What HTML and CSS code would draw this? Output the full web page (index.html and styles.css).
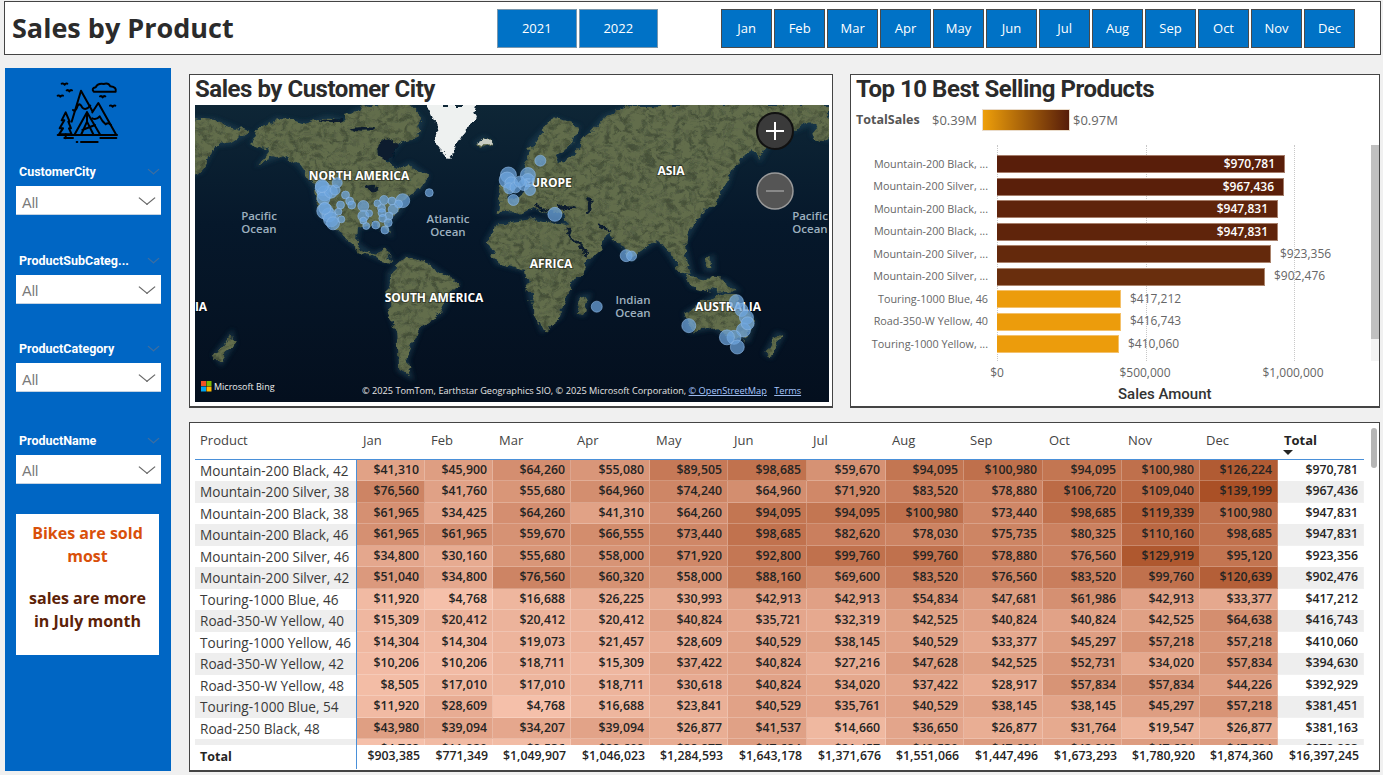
FILE: index.html
```html
<!DOCTYPE HTML>
<html>
<head>
<meta http-equiv="Content-Type" content="text/html; charset=utf-8">
<title>Sales by Product</title>
<link rel="stylesheet" href="styles.css">
</head>

<body>
<header class="topbar">
	<h1 class="page-title">Sales by Product</h1>
	<div class="years">
		<div class="btn year">2021</div>
		<div class="btn year">2022</div>
	</div>
	<div class="months">
		<div class="btn month">Jan</div>
		<div class="btn month">Feb</div>
		<div class="btn month">Mar</div>
		<div class="btn month">Apr</div>
		<div class="btn month">May</div>
		<div class="btn month">Jun</div>
		<div class="btn month">Jul</div>
		<div class="btn month">Aug</div>
		<div class="btn month">Sep</div>
		<div class="btn month">Oct</div>
		<div class="btn month">Nov</div>
		<div class="btn month">Dec</div>
	</div>
</header>

<div class="layout">
	<aside class="sidebar">
		<svg class="logo" viewBox="0 0 255 225" width="85" height="75">
			<g fill="none" stroke="#000" stroke-width="6" stroke-linejoin="round" stroke-linecap="round">
				<path d="M80 140 L108 47 L142 108"/>
				<path d="M84 105 Q92 112 98 92 Q104 82 112 98 Q122 108 136 92"/>
				<path d="M88 180 L126 112 L166 180"/>
				<path d="M126 112 L126 140 L108 180 M126 140 L146 180 M112 165 L150 150"/>
				<path d="M142 112 L160 84 L214 180"/>
				<path d="M142 130 Q154 136 164 124 Q172 140 182 148 Q190 140 198 150"/>
				<path d="M38 180 H216"/>
				<path d="M62 112 L50 136 H58 L44 160 H54 L42 178 H80 L72 160 H78 L70 140 H74 Z"/>
				<path d="M62 178 V190"/>
				<path d="M58 189 H84 M166 189 H214 M108 201 H158 M95 201 H97"/>
				<path d="M146 50 Q138 40 152 37 Q158 24 176 27 Q190 22 196 34 Q216 36 212 50 H146 Z"/>
				<path d="M50 26 Q56 24 59 29 Q62 24 67 26 M65 46 Q70 44 73 49 Q76 44 81 46 M38 62 Q44 60 46 65 Q49 60 54 62 M165 64 Q170 62 173 67 Q176 62 181 64 M195 92 Q200 90 203 95 Q206 90 211 92"/>
			</g>
		</svg>

		<div class="slicer">
			<div class="slicer-head"><span>CustomerCity</span><i class="chev dim"></i></div>
			<div class="slicer-box"><span>All</span><i class="chev"></i></div>
		</div>
		<div class="slicer">
			<div class="slicer-head"><span>ProductSubCateg...</span><i class="chev dim"></i></div>
			<div class="slicer-box"><span>All</span><i class="chev"></i></div>
		</div>
		<div class="slicer">
			<div class="slicer-head"><span>ProductCategory</span><i class="chev dim"></i></div>
			<div class="slicer-box"><span>All</span><i class="chev"></i></div>
		</div>
		<div class="slicer last">
			<div class="slicer-head"><span>ProductName</span><i class="chev dim"></i></div>
			<div class="slicer-box"><span>All</span><i class="chev"></i></div>
		</div>

		<div class="note">
			<p class="orange">Bikes are sold most</p>
			<p class="brown">sales are more in July month</p>
		</div>
	</aside>

	<main class="content">
		<section class="card map-card">
			<h2 class="card-title">Sales by Customer City</h2>
			<div class="map">
				<svg id="mapSvg" viewBox="0 0 634 297" width="634" height="297">
					<defs>
						<linearGradient id="sea" x1="0" y1="0" x2="0" y2="1">
							<stop offset="0" stop-color="#0e2636"/>
							<stop offset=".4" stop-color="#06182b"/>
							<stop offset="1" stop-color="#040f1e"/>
						</linearGradient>
						<filter id="soft"><feGaussianBlur stdDeviation="14"/></filter>
						<filter id="coast"><feGaussianBlur stdDeviation="7"/></filter>
						<filter id="rough" filterUnits="userSpaceOnUse" x="0" y="0" width="1600" height="950">
							<feTurbulence type="fractalNoise" baseFrequency=".028" numOctaves="5" seed="7" result="n"/>
							<feDisplacementMap in="SourceGraphic" in2="n" scale="34" xChannelSelector="R" yChannelSelector="G"/>
							<feGaussianBlur stdDeviation=".8"/>
						</filter>
						<filter id="grain" filterUnits="userSpaceOnUse" x="0" y="0" width="1600" height="950">
							<feTurbulence type="fractalNoise" baseFrequency=".06" numOctaves="4" seed="4"/>
							<feColorMatrix type="matrix" values="0 0 0 0 .06  0 0 0 0 .08  0 0 0 0 .04  0 0 0 3 -1.25"/>
							<feComposite in2="SourceAlpha" operator="in"/>
						</filter>
						<g id="land">
							<!-- north america -->
							<path d="M150 130 L170 85 L210 55 L280 70 L330 50 L380 62 L395 35 L440 15 L525 15 L560 60 L545 112 L510 120 L490 150 L470 185 L500 210 L530 190 L572 228 L560 262 L525 290 L505 335 L478 368 L482 402 L465 385 L452 372 L405 385 L402 430 L440 462 L470 450 L488 485 L462 480 L410 450 L370 410 L345 375 L312 340 L300 262 L262 195 L225 165 L170 190 L195 150 Z"/>
							<!-- south america -->
							<path d="M480 520 L522 470 L575 492 L645 552 L605 640 L552 682 L522 780 L532 832 L505 812 L500 700 L478 620 Z"/>
							<!-- africa -->
							<path d="M715 425 L742 368 L830 355 L902 378 L950 445 L996 420 L962 482 L915 560 L892 650 L850 692 L822 600 L810 512 L742 490 Z"/>
							<!-- eurasia -->
							<path d="M742 338 L748 305 L790 298 L815 262 L800 212 L825 125 L880 55 L935 80 L925 130 L880 165 L890 195 L920 170 L950 120 L1000 50 L1070 15 L1541 15 L1541 55 L1500 70 L1440 100 L1390 145 L1375 180 L1358 150 L1310 195 L1295 255 L1270 300 L1232 345 L1192 428 L1210 525 L1185 520 L1160 470 L1130 420 L1065 475 L1042 440 L1010 400 L1000 420 L955 465 L905 385 L900 345 L860 338 L830 320 L800 340 L770 340 Z"/>
							<!-- islands -->
							<path d="M690 128 L710 112 L726 130 L705 140 Z"/>
							<path d="M1195 525 L1240 535 L1290 540 L1320 570 L1270 575 L1210 560 Z"/>
							<path d="M1240 480 L1260 470 L1262 510 L1245 510 Z"/>
							<path d="M940 590 L962 585 L948 645 L935 640 Z"/>
							<path d="M1195 640 L1260 590 L1300 578 L1330 610 L1360 668 L1345 722 L1290 705 L1262 682 L1208 695 Z"/>
							<path d="M1415 700 L1430 705 L1400 770 L1388 760 Z"/>
							<path d="M60 765 L100 700 L105 730 L75 790 Z"/>
							<path d="M12 55 L60 60 L140 100 L100 130 L60 135 L25 215 L0 225 L0 55 Z"/>
							<path d="M1500 60 L1560 50 L1560 125 L1505 110 Z"/>
							<path d="M750 258 L775 235 L775 300 L745 305 Z"/>
						</g>
						<clipPath id="landClip"><use href="#land"/></clipPath>
					</defs>

					<rect width="634" height="297" fill="url(#sea)"/>
					<g transform="translate(-4.98 -5) scale(.4146 .3333)">
						<use href="#land" fill="#1a3c50" stroke="#1a3c50" stroke-width="10" filter="url(#coast)" opacity=".7"/>
						<g filter="url(#rough)">
							<use href="#land" fill="#626d4c"/>
							<g clip-path="url(#landClip)">
								<g filter="url(#soft)">
									<ellipse cx="850" cy="410" rx="115" ry="50" fill="#b3a47a"/>
									<ellipse cx="965" cy="400" rx="40" ry="36" fill="#ad9b71"/>
									<ellipse cx="1060" cy="310" rx="140" ry="40" fill="#988c63"/>
									<ellipse cx="1270" cy="645" rx="75" ry="45" fill="#ab9465"/>
									<ellipse cx="400" cy="345" rx="55" ry="45" fill="#918660"/>
									<ellipse cx="550" cy="550" rx="60" ry="55" fill="#31522a"/>
									<ellipse cx="865" cy="530" rx="50" ry="35" fill="#3b582f"/>
									<ellipse cx="1190" cy="480" rx="40" ry="55" fill="#3a5830"/>
									<ellipse cx="1180" cy="130" rx="220" ry="55" fill="#5e6a46"/>
									<ellipse cx="320" cy="135" rx="120" ry="50" fill="#556245"/>
									<ellipse cx="1110" cy="425" rx="40" ry="35" fill="#7b7c52"/>
									<ellipse cx="480" cy="40" rx="80" ry="25" fill="#7d867a"/>
								</g>
							</g>
							<use href="#land" filter="url(#grain)"/>
							<!-- inland water -->
							<g fill="#071a2d">
								<ellipse cx="478" cy="150" rx="24" ry="32"/>
								<ellipse cx="905" cy="322" rx="26" ry="7"/>
								<ellipse cx="962" cy="318" rx="7" ry="20"/>
								<ellipse cx="445" cy="262" rx="18" ry="7"/>
								<ellipse cx="345" cy="60" rx="30" ry="6"/>
								<ellipse cx="420" cy="85" rx="26" ry="7"/>
							</g>
							<path d="M905 385 L958 470 M985 368 L1012 395 M830 310 L860 334" fill="none" stroke="#071a2d" stroke-width="6"/>
							<path d="M578 15 L692 15 L672 90 L622 172 L600 140 Z" fill="#eef1f0"/>
							<path d="M692 126 L710 114 L724 128 L706 136 Z" fill="#c8cdc4"/>
						</g>
					</g>

					<g class="lbl-sea">
						<text x="64" y="115">Pacific</text>
						<text x="64" y="128">Ocean</text>
						<text x="253" y="118">Atlantic</text>
						<text x="253" y="131">Ocean</text>
						<text x="438" y="199">Indian</text>
						<text x="438" y="212">Ocean</text>
						<text x="615" y="115">Pacific</text>
						<text x="615" y="128">Ocean</text>
					</g>
					<g class="lbl-land">
						<text x="164" y="75">NORTH AMERICA</text>
						<text x="476" y="70">ASIA</text>
						<text x="353" y="82">EUROPE</text>
						<text x="356" y="163">AFRICA</text>
						<text x="239" y="197">SOUTH AMERICA</text>
						<text x="533" y="206">AUSTRALIA</text>
						<text x="6" y="206">IA</text>
					</g>
					<g id="pins"></g>

					<g class="zoom-btn">
						<circle cx="580" cy="26" r="18" fill="#3a3a3a" stroke="#111" stroke-width="2"/>
						<path d="M571 26 H589 M580 17 V35" stroke="#fff" stroke-width="2"/>
						<circle cx="580" cy="86" r="18" fill="#555" stroke="#9a9a9a" stroke-width="1.5"/>
						<path d="M571 86 H589" stroke="#888" stroke-width="2"/>
					</g>

					<g>
						<rect x="6" y="276" width="5" height="5" fill="#f25022"/>
						<rect x="11.5" y="276" width="5" height="5" fill="#7fba00"/>
						<rect x="6" y="281.5" width="5" height="5" fill="#00a4ef"/>
						<rect x="11.5" y="281.5" width="5" height="5" fill="#ffb900"/>
					</g>
					<text class="bing" x="19" y="285">Microsoft Bing</text>
					<text class="attrib" x="167" y="289">© 2025 TomTom, Earthstar Geographics SIO, © 2025 Microsoft Corporation, <tspan class="attrib-link">© OpenStreetMap</tspan>  <tspan class="attrib-link" dx="5">Terms</tspan></text>
				</svg>
			</div>
		</section>

		<section class="card chart-card">
			<h2 class="card-title">Top 10 Best Selling Products</h2>
			<div class="legend">
				<b>TotalSales</b>
				<span>$0.39M</span>
				<i class="legend-bar"></i>
				<span>$0.97M</span>
			</div>
			<div class="chart">
				<div class="plot">
					<i class="grid g0"></i><i class="grid g1"></i><i class="grid g2"></i>
					<div class="bar-row"><span class="bar-label">Mountain-200 Black, ...</span><div class="bar in" style="width:288px;background:#591e0a">$970,781</div></div>
					<div class="bar-row"><span class="bar-label">Mountain-200 Silver, ...</span><div class="bar in" style="width:287px;background:#5a1f0a">$967,436</div></div>
					<div class="bar-row"><span class="bar-label">Mountain-200 Black, ...</span><div class="bar in" style="width:281px;background:#5f240b">$947,831</div></div>
					<div class="bar-row"><span class="bar-label">Mountain-200 Black, ...</span><div class="bar in" style="width:281px;background:#5f240b">$947,831</div></div>
					<div class="bar-row"><span class="bar-label">Mountain-200 Silver, ...</span><div class="bar" style="width:274px;background:#64290c"></div><span class="bar-value">$923,356</span></div>
					<div class="bar-row"><span class="bar-label">Mountain-200 Silver, ...</span><div class="bar" style="width:268px;background:#692e0d"></div><span class="bar-value">$902,476</span></div>
					<div class="bar-row"><span class="bar-label">Touring-1000 Blue, 46</span><div class="bar" style="width:124px;background:#ec9c0c"></div><span class="bar-value">$417,212</span></div>
					<div class="bar-row"><span class="bar-label">Road-350-W Yellow, 40</span><div class="bar" style="width:124px;background:#ec9c0c"></div><span class="bar-value">$416,743</span></div>
					<div class="bar-row"><span class="bar-label">Touring-1000 Yellow, ...</span><div class="bar" style="width:122px;background:#ec9c0c"></div><span class="bar-value">$410,060</span></div>
				</div>
				<div class="chart-scroll"><i></i></div>
			</div>
			<div class="axis">
				<span>$0</span><span>$500,000</span><span>$1,000,000</span>
			</div>
			<div class="axis-title">Sales Amount</div>
		</section>

		<section class="card matrix-card">
			<div class="matrix">
				<div class="m-row m-head" id="mHead"></div>
				<div class="m-body" id="mBody"></div>
				<div class="m-row m-total" id="mTotal"></div>
			</div>
			<i class="matrix-scroll"></i>
		</section>
	</main>
</div>
<script src="script.js"></script>
</body>
</html>
```

FILE: styles.css
```css
*{
	margin: 0;
	padding: 0;
	box-sizing: border-box;
}

body{
	width: 1383px;
	height: 775px;
	overflow: hidden;
	background-color: #f0f0f0;
	font-family: "Open Sans", "Liberation Sans", sans-serif;
	color: #252423;
}
i{
	display: block;
}

/* top bar */
.topbar{
	display: flex;
	align-items: center;
	height: 54px;
	margin: 1px 2px 0 4px;
	padding-left: 7px;
	background-color: white;
	border: 1px solid #444;
}
.page-title{
	width: 485px;
	padding-bottom: 2px;
	font-size: 27px;
	font-weight: 700;
	color: #2b2b2b;
	white-space: nowrap;
}
.years,
.months{
	display: flex;
	gap: 2px;
}
.months{
	margin-left: 63px;
	gap: 1.7px;
}
.btn{
	display: flex;
	align-items: center;
	justify-content: center;
	height: 39px;
	background-color: #0072c6;
	color: white;
	font-size: 13px;
}
.year{
	width: 79.5px;
	border: 1px solid #7a97ad;
}
.month{
	width: 51.3px;
	border: 1.5px solid #4a4a4a;
}

/* page layout */
.layout{
	display: grid;
	grid-template-columns: 166px 1fr;
	column-gap: 18px;
	margin: 13px 4px 0 5px;
}
.sidebar{
	height: 703px;
	padding-top: 7px;
	background-color: #0066c4;
}
.logo{
	display: block;
	margin-left: 40px;
}
.slicer{
	margin: 14px 10px 0 11px;
	height: 51px;
}
.slicer + .slicer{
	margin-top: 37.5px;
}
.slicer.last{
	margin-top: 40.5px;
}
.slicer-head{
	display: flex;
	justify-content: space-between;
	align-items: center;
	height: 22px;
	padding: 0 2px 7px 3px;
	color: white;
	font-family: Roboto, "Liberation Sans", sans-serif;
	font-size: 12.5px;
	font-weight: 700;
}
.slicer-box{
	display: flex;
	justify-content: space-between;
	align-items: center;
	height: 29px;
	padding: 5px 5px 0 6px;
	background-color: white;
	border-bottom: 1px solid #c5d3e2;
	color: #7a7a7a;
	font-family: "Liberation Sans", sans-serif;
	font-size: 14.5px;
}
.chev{
	width: 10px;
	height: 10px;
	margin: -9px 4px 0 0;
	border-right: 1px solid #666;
	border-bottom: 1px solid #666;
	transform: scaleX(1.2) rotate(45deg);
}
.chev.dim{
	width: 7px;
	height: 7px;
	margin: -4px 2px 0 0;
	border-color: #3f6f9f;
}
.note{
	width: 143px;
	height: 141px;
	margin: 30px 0 0 11px;
	padding-top: 8px;
	background-color: white;
	text-align: center;
	font-size: 16px;
	font-weight: 700;
	line-height: 23px;
}
.orange{
	color: #d9500a;
	padding: 0 12px;
}
.brown{
	margin-top: 19px;
	color: #5c2208;
	padding: 0 10px;
}

.content{
	display: grid;
	grid-template-columns: 644px 530px;
	grid-template-rows: 334px 350px;
	column-gap: 17px;
	row-gap: 14px;
	padding-top: 6px;
}
.card{
	position: relative;
	background-color: white;
	border: 1px solid #444;
	border-bottom-width: 2px;
}
.card-title{
	height: 30px;
	font-family: Roboto, "Liberation Sans", sans-serif;
	font-size: 24px;
	font-weight: 700;
	letter-spacing: -0.47px;
	line-height: 28px;
	color: #2b2b2b;
	white-space: nowrap;
}

/* map */
.map-card{
	padding-left: 5px;
}
.map{
	width: 634px;
	height: 297px;
	overflow: hidden;
}
.map svg{
	display: block;
}
.map text{
	text-anchor: middle;
	font-family: "Open Sans", "Liberation Sans", sans-serif;
}
.lbl-land text{
	fill: white;
	font-size: 12px;
	font-weight: 700;
	stroke: rgba(0, 0, 0, 0.35);
	stroke-width: 2px;
	paint-order: stroke;
}
.lbl-sea text{
	fill: #9db0bf;
	font-size: 11.5px;
	font-weight: 600;
}
.map text.bing{
	text-anchor: start;
	fill: #eee;
	font-size: 9px;
}
.map text.attrib{
	text-anchor: start;
	fill: #e4e4e4;
	font-size: 9.2px;
}
.attrib-link{
	fill: #a9c8ff;
	text-decoration: underline;
}

/* bar chart */
.chart-card{
	padding-left: 5px;
}
.legend{
	display: flex;
	align-items: center;
	height: 23px;
	margin-top: 3px;
	font-size: 13px;
	color: #666;
}
.legend b{
	width: 76px;
	font-size: 12.5px;
	color: #555;
}
.legend span{
	width: 50px;
}
.legend-bar{
	width: 88px;
	height: 22px;
	margin-right: 3px;
	background: linear-gradient(to right, #ee9f0a, #571d0a);
	border: 1px solid #eadccb;
}
.chart{
	display: flex;
	margin-top: 14px;
	height: 216px;
}
.plot{
	position: relative;
	width: 511px;
	padding-top: 8px;
}
.grid{
	position: absolute;
	top: 0;
	bottom: 0;
	border-left: 1px dotted #c8c8c8;
}
.g0{
	left: 141px;
}
.g1{
	left: 289.5px;
}
.g2{
	left: 437.5px;
}
.bar-row{
	position: relative;
	display: flex;
	align-items: center;
	height: 22.5px;
}
.bar-label{
	width: 132px;
	margin-right: 9px;
	padding-bottom: 2px;
	text-align: right;
	font-size: 10.8px;
	color: #666;
	white-space: nowrap;
}
.bar{
	height: 18px;
	border: 1px solid rgba(255, 240, 225, 0.45);
	border-left: 0;
}
.bar.in{
	padding-right: 9px;
	text-align: right;
	font-size: 12px;
	font-weight: 600;
	line-height: 16px;
	color: white;
}
.bar-value{
	margin-left: 9px;
	padding-bottom: 2px;
	font-size: 12px;
	color: #666;
}
.chart-scroll{
	width: 8px;
	margin-left: 6px;
	background-color: #f3f3f3;
}
.chart-scroll i{
	height: 194px;
	background-color: #c0c0c0;
}
.axis{
	position: relative;
	display: flex;
	justify-content: space-between;
	width: 366px;
	margin: 3px 0 0 106px;
	font-size: 12px;
	line-height: 18px;
	color: #666;
}
.axis span{
	width: 70px;
	text-align: center;
}
.axis-title{
	margin: 2px 0 0 262px;
	font-family: Roboto, "Liberation Sans", sans-serif;
	font-size: 15px;
	font-weight: 500;
	line-height: 20px;
	color: #333;
}

/* matrix */
.matrix-card{
	grid-column: 1 / 3;
	padding: 5px 0 0 5px;
}
.matrix{
	width: 1169px;
}
.m-row{
	display: grid;
	grid-template-columns: 162px 68px 68px 78px 79px 78px 79px 79px 78px 79px 79px 78px 78px 86px;
}
.m-head{
	height: 31.5px;
	border-bottom: 1px solid #4a90d9;
	font-size: 13px;
	line-height: 25px;
	color: #444;
}
.m-head div{
	padding-left: 6px;
}
.m-head div:first-child{
	padding-left: 5px;
}
.m-head .sorted{
	position: relative;
	font-weight: 700;
	color: #252423;
}
.m-head .sorted:after{
	content: "";
	position: absolute;
	left: 5px;
	top: 22px;
	border-left: 5px solid transparent;
	border-right: 5px solid transparent;
	border-top: 5px solid #252423;
}
.m-body{
	height: 285.5px;
	overflow: hidden;
}
.m-body .m-row{
	height: 21.5px;
}
.m-row > .name{
	padding-left: 5px;
	border-right: 1px solid #4a90d9;
	font-size: 13.6px;
	line-height: 21.5px;
	color: #3a3a3a;
	white-space: nowrap;
}
.m-row > .num{
	padding-right: 5px;
	text-align: right;
	font-size: 12.3px;
	font-weight: 600;
	line-height: 20px;
	border-right: 1px solid rgba(255, 255, 255, 0.22);
	border-bottom: 1px solid rgba(255, 255, 255, 0.22);
}
.m-body .m-row:nth-child(even) .name,
.m-body .m-row:nth-child(even) .sum{
	background-color: #eeeeee;
}
.m-total{
	height: 23px;
}
.m-total > .name{
	font-weight: 700;
	line-height: 24px;
	color: #252423;
	font-size: 12.5px;
}
.m-total > .num{
	line-height: 21px;
	border: 0;
}
.matrix-scroll{
	position: absolute;
	left: 1181px;
	top: 5px;
	width: 6px;
	height: 40px;
	border-radius: 3px;
	background-color: #b5b5b5;
}
```

FILE: script.js
```javascript
// matrix data: product, Jan..Dec, total
var months = ['Jan','Feb','Mar','Apr','May','Jun','Jul','Aug','Sep','Oct','Nov','Dec'];
var rows = [
	['Mountain-200 Black, 42',41310,45900,64260,55080,89505,98685,59670,94095,100980,94095,100980,126224,970781],
	['Mountain-200 Silver, 38',76560,41760,55680,64960,74240,64960,71920,83520,78880,106720,109040,139199,967436],
	['Mountain-200 Black, 38',61965,34425,64260,41310,64260,94095,94095,100980,73440,98685,119339,100980,947831],
	['Mountain-200 Black, 46',61965,61965,59670,66555,73440,98685,82620,78030,75735,80325,110160,98685,947831],
	['Mountain-200 Silver, 46',34800,30160,55680,58000,71920,92800,99760,99760,78880,76560,129919,95120,923356],
	['Mountain-200 Silver, 42',51040,34800,76560,60320,58000,88160,69600,83520,76560,83520,99760,120639,902476],
	['Touring-1000 Blue, 46',11920,4768,16688,26225,30993,42913,42913,54834,47681,61986,42913,33377,417212],
	['Road-350-W Yellow, 40',15309,20412,20412,20412,40824,35721,32319,42525,40824,40824,42525,64638,416743],
	['Touring-1000 Yellow, 46',14304,14304,19073,21457,28609,40529,38145,40529,33377,45297,57218,57218,410060],
	['Road-350-W Yellow, 42',10206,10206,18711,15309,37422,40824,27216,47628,42525,52731,34020,57834,394630],
	['Road-350-W Yellow, 48',8505,17010,17010,18711,30618,40824,34020,37422,28917,57834,57834,44226,392929],
	['Touring-1000 Blue, 54',11920,28609,4768,16688,23841,40529,35761,40529,38145,38145,45297,57218,381451],
	['Road-250 Black, 48',43980,39094,34207,39094,26877,41537,14660,36650,26877,31764,19547,26877,381163],
	['',4768,11920,9536,28609,28877,47684,21457,42530,47684,42913,47684,47684,378883]
];
var totals = ['Total',903385,771349,1049907,1046023,1284593,1643178,1371676,1551066,1447496,1673293,1780920,1874360,16397245];

var money = function(n) {
	return '$' + n.toLocaleString('en-US');
};

// heat colour, same linear scale as the report
var heat = function(n) {
	var t = (n - 4768) / (139199 - 4768);
	var r = Math.round(245 - 75 * t);
	var g = Math.round(192 - 112 * t);
	var b = Math.round(170 - 132 * t);
	return 'rgb(' + r + ',' + g + ',' + b + ')';
};

var cell = function(cls, text) {
	var d = document.createElement('div');
	d.className = cls;
	d.textContent = text;
	return d;
};

var head = document.getElementById('mHead');
head.appendChild(cell('', 'Product'));
months.forEach(function(m) {
	head.appendChild(cell('', m));
});
head.appendChild(cell('sorted', 'Total'));

var body = document.getElementById('mBody');
rows.forEach(function(row) {
	var line = document.createElement('div');
	line.className = 'm-row';
	line.appendChild(cell('name', row[0]));
	for (var i = 1; i <= 12; i++) {
		var c = cell('num', money(row[i]));
		c.style.backgroundColor = heat(row[i]);
		line.appendChild(c);
	}
	line.appendChild(cell('num sum', money(row[13])));
	body.appendChild(line);
});

var total = document.getElementById('mTotal');
total.appendChild(cell('name', totals[0]));
for (var j = 1; j < totals.length; j++) {
	total.appendChild(cell('num', money(totals[j])));
}

// map bubbles, x y radius
var pins = [
	[320,265,7.5],[325,280,7.5],[322,295,6.5],[340,275,6.5],[350,270,5],[318,258,6.5],[355,248,5],
	[325,333,8],[335,345,7],[340,358,7.5],[345,370,6.5],[325,325,6],[365,358,3.5],
	[375,285,4],[385,303,4],[390,315,4],[363,315,4],[358,335,3.5],[418,318,5.5],[418,348,5.5],[432,340,3.5],[418,362,3.5],[425,378,3.5],[448,375,4],
	[452,310,3.5],[468,300,4.5],[487,303,4],[513,302,7],[503,312,4],[462,325,4],[490,328,5],[463,338,4],[480,348,4],[465,355,4],[478,368,4],[470,390,4],[577,278,4],
	[845,182,5.5],[768,225,8],[765,240,8],[775,250,6.5],[770,265,5.5],[785,262,5.5],[780,300,5.5],[815,225,7.5],[815,240,6.5],[805,255,5.5],[820,270,5.5],[795,245,5.5],[880,343,7],
	[1052,467,6],[1065,468,5],[981,620,5.5],
	[1203,677,7],[1318,605,7],[1330,630,6.5],[1342,652,7],[1335,690,7],[1345,670,6.5],[1312,712,7],[1295,712,7.5],[1320,741,7]
];
var group = document.getElementById('pins');
pins.forEach(function(p) {
	var c = document.createElementNS('http://www.w3.org/2000/svg', 'circle');
	c.setAttribute('cx', (p[0] - 12) / 2.412);
	c.setAttribute('cy', (p[1] - 15) / 3);
	c.setAttribute('r', p[2]);
	c.setAttribute('fill', '#6ea5de');
	c.setAttribute('fill-opacity', '.72');
	c.setAttribute('stroke', '#8fbbe8');
	c.setAttribute('stroke-opacity', '.6');
	group.appendChild(c);
});
```
